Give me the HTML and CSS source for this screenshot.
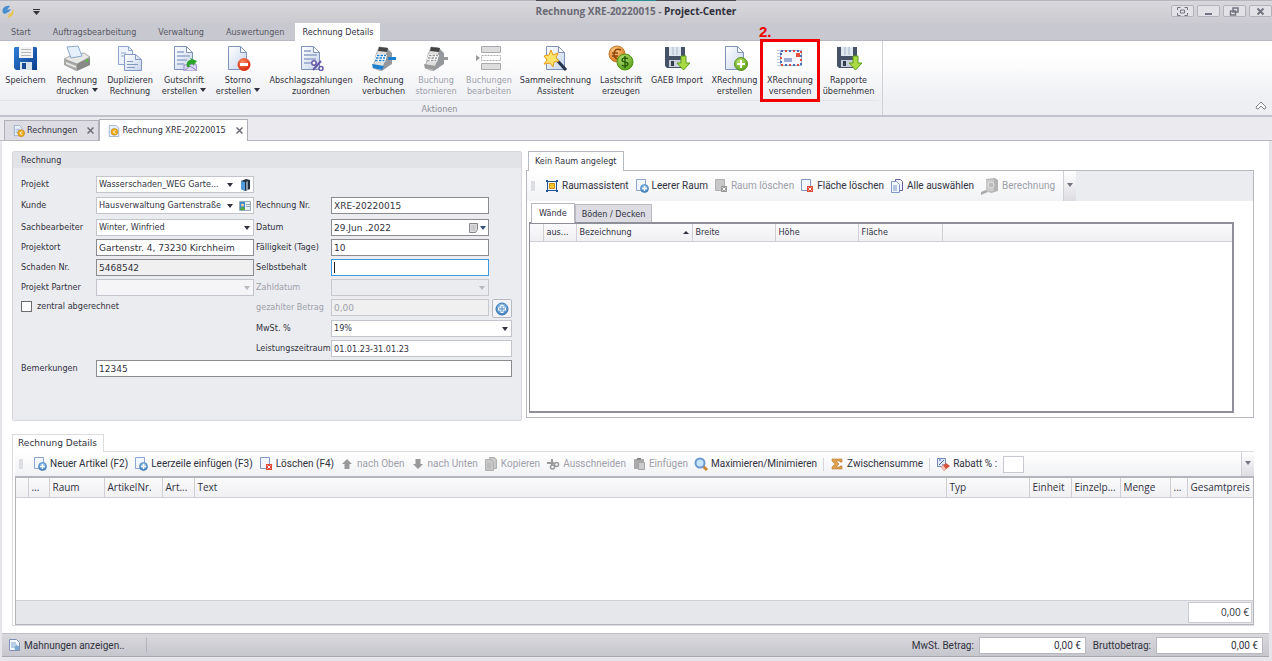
FILE: index.html
```html
<!DOCTYPE html>
<html lang="de">
<head>
    <meta charset="UTF-8">
    <meta name="viewport" content="width=device-width, initial-scale=1.0">
    <title>Rechnung XRE-20220015 - Project-Center</title>
    <link rel="stylesheet" href="styles.css">
</head>
<body>
    <svg class="sprite" aria-hidden="true">
        <defs>
            <linearGradient id="gBlue" x1="0" y1="0" x2="1" y2="1"><stop offset="0" stop-color="#2f7fd8"/><stop offset="1" stop-color="#0d3f8c"/></linearGradient>
            <linearGradient id="gPaper" x1="0" y1="0" x2="1" y2="1"><stop offset="0" stop-color="#ffffff"/><stop offset="1" stop-color="#c6d4ec"/></linearGradient>
            <radialGradient id="gRed" cx=".4" cy=".3" r=".7"><stop offset="0" stop-color="#ff8a60"/><stop offset="1" stop-color="#d62408"/></radialGradient>
            <radialGradient id="gGreen" cx=".4" cy=".3" r=".8"><stop offset="0" stop-color="#b8e070"/><stop offset="1" stop-color="#4e9a10"/></radialGradient>
            <radialGradient id="gOrange" cx=".4" cy=".3" r=".8"><stop offset="0" stop-color="#ffd08a"/><stop offset="1" stop-color="#cc6a10"/></radialGradient>
            <radialGradient id="gBall" cx=".5" cy=".3" r=".8"><stop offset="0" stop-color="#a8d4f4"/><stop offset="1" stop-color="#2d6fb4"/></radialGradient>
            <symbol id="page" viewBox="0 0 26 26">
                <path d="M3.5 1.5h12l6 6v17h-18z" fill="url(#gPaper)" stroke="#7f93b8"/>
                <path d="M15.5 1.5v6h6z" fill="#fff" stroke="#7f93b8"/>
            </symbol>
            <symbol id="save" viewBox="0 0 26 26">
                <path d="M2 2h21l1 1v22H3l-2-2V3z" fill="url(#gBlue)"/>
                <path d="M6 2h14v11H6z" fill="#f4f4f4"/>
                <path d="M8 4.500h10M8 7.500h10M8 10.500h10" stroke="#b8b8b8"/>
                <path d="M7 17h12v8H7z" fill="#d9e1ea"/>
                <path d="M9 18h4v6H9z" fill="#174a92"/>
            </symbol>
            <symbol id="print" viewBox="0 0 26 26">
                <path d="M0 15l8-4 12-2 6 4v7l-14 6L0 20z" fill="#a9aaa8"/>
                <path d="M0 14l8-4 12-2 6 4-13 7z" fill="#e8e8e6" stroke="#8c8c8a" stroke-width=".7"/>
                <path d="M3 2l11-1 4 10-11 2z" fill="#e4f1fc" stroke="#8ca9cc"/>
                <path d="M13 19l13-6v7l-13 6z" fill="#888a88"/>
                <path d="M2 17l10 4v2l-10-4z" fill="#e6e6e4"/>
                <path d="M22 16l2-1" stroke="#4cc82a" stroke-width="2"/>
            </symbol>
            <symbol id="copy" viewBox="0 0 26 26">
                <path d="M1.500 1.500h10l4 4v14h-14z" fill="#edf2fb" stroke="#8fa4cf"/>
                <path d="M11.500 1.500v4h4M4 8h5M4 11h5" fill="none" stroke="#8fa4cf"/>
                <path d="M7.500 9.500h11l6 5v11h-17z" fill="url(#gPaper)" stroke="#8498c4"/>
                <path d="M18.500 9.500v5h6M10 16.500h6M10 19.500h11M10 22.500h8" fill="none" stroke="#8498c4"/>
            </symbol>
            <symbol id="credit" viewBox="0 0 26 26">
                <use href="#page"/>
                <path d="M6 7h7M6 11h13M6 15h10M6 19h7" stroke="#a9b8d4" stroke-width="2"/>
                <path d="M13 20l12-1 1 7H13z" fill="#ddd9f4" stroke="#9a8fc6"/>
                <path d="M14 25l5-4 6 4" fill="none" stroke="#8f80ba"/>
                <path d="M16 22c-1-5 1-7 4-7l-1-2 7 3-4 5v-2c-4 0-4 1-3 3z" fill="#2da52c"/>
            </symbol>
            <symbol id="cancel" viewBox="0 0 26 26">
                <use href="#page"/>
                <circle cx="19" cy="19.500" r="6.500" fill="url(#gRed)"/>
                <path d="M15 18h8v3h-8z" fill="#fff"/>
            </symbol>
            <symbol id="percent" viewBox="0 0 26 26">
                <use href="#page"/>
                <path d="M6 6h7M6 10h13M6 14h12M6 18h7" stroke="#a3b3d2" stroke-width="2"/>
                <path d="M15 25l8-9" stroke="#6758a8" stroke-width="2"/>
                <circle cx="16" cy="18" r="2.200" fill="#fff" stroke="#6758a8" stroke-width="1.500"/>
                <circle cx="23" cy="23.500" r="2" fill="#fff" stroke="#6758a8" stroke-width="1.500"/>
            </symbol>
            <symbol id="register" viewBox="0 0 26 26">
                <path d="M8 2l8 1 4 5-4 14-6 4-8-3 3-13z" fill="#e0e0df" stroke="#999" stroke-width=".7"/>
                <path d="M16 4l5 4v11l-11 7 4-10z" fill="#94979b"/>
                <path d="M8 2l9 1-1 4-9-1z" fill="#444"/>
                <path d="M6 9l10 1-2 7-11-1z" fill="#fff"/>
                <path d="M6 10.500h2.500M9.500 10.500h2.500M13 10.500h2M5 13h2.500M8.500 13h2.500M12 13h2M4 15.500h2.500M8 15.500h2.500M11.500 15.500h2" class="keys" stroke-width="1.500"/>
                <path d="M1 19l12 2-2 4-9-2z" class="drawer"/>
                <path d="M17 12l8 0v3l-8 0z" class="drawer"/>
            </symbol>
            <symbol id="rows" viewBox="0 0 26 26">
                <path d="M5.500 1.500h19v6h-19zM5.500 18.500h19v6h-19z" fill="#ddd" stroke="#aaa"/>
                <path d="M5.500 10.500h19v5h-19z" fill="#fff" stroke="#aaa" stroke-dasharray="2 1"/>
                <path d="M0 10l4 3-4 3z" fill="#999"/>
            </symbol>
            <symbol id="wizard" viewBox="0 0 26 26">
                <use href="#page"/>
                <path d="M12 13l11 12" stroke="#26344e" stroke-width="3"/>
                <path d="M12 13l3 3" stroke="#f0f0f0" stroke-width="3"/>
                <path d="M8 5l2 5 5-2-2 5 3 3-5 1-1 5-3-4-6 1 3-4-3-4 5-1z" fill="#ffe36a" stroke="#e99a1c"/>
            </symbol>
            <symbol id="coins" viewBox="0 0 26 26">
                <circle cx="9" cy="9" r="8" fill="url(#gOrange)" stroke="#c67a28"/>
                <path d="M13 5c-4-2-7 0-7 4s3 6 7 4M4 8h6M4 11h6" fill="none" stroke="#914507" stroke-width="1.500"/>
                <circle cx="17" cy="17" r="8" fill="url(#gGreen)" stroke="#4f9412"/>
                <path d="M20 14c-2-2-6-1-6 1 0 3 6 1 6 4 0 2-4 3-6 1M17 11v12" fill="none" stroke="#28600a" stroke-width="1.500"/>
            </symbol>
            <symbol id="import" viewBox="0 0 26 26">
                <path d="M1 2h20v21H3l-2-2z" fill="#465366"/>
                <path d="M5 2h12v9H5z" fill="#dfe7f1"/>
                <path d="M9 2v8M13 2v8" stroke="#aab8ca"/>
                <path d="M5 15h12v7H5z" fill="#c8cfda"/>
                <path d="M7 16h3v5H7z" fill="#333e50"/>
                <path d="M17 11h5v7h4l-6.500 7-6.500-7h4z" fill="#a9d943" stroke="#5d9d1b"/>
            </symbol>
            <symbol id="create" viewBox="0 0 26 26">
                <use href="#page"/>
                <circle cx="19" cy="19" r="6.500" fill="url(#gGreen)" stroke="#5c941f"/>
                <path d="M19 15v8M15 19h8" stroke="#fff" stroke-width="2"/>
            </symbol>
            <symbol id="mail" viewBox="0 0 26 26">
                <path d="M0 5.500h3M0 8.500h3M0 11.500h3M0 14.500h3M0 17.500h3M0 20.500h3" stroke="#c2cbe2"/>
                <path d="M3.500 5.500h21v15h-21z" fill="#f5f7fd" stroke="#9aaed8"/>
                <path d="M4 6h20v14H4z" fill="none" stroke="#4a6cb0" stroke-width="2" stroke-dasharray="2 6"/>
                <path d="M4 6h20v14H4z" fill="none" stroke="#dc4c43" stroke-width="2" stroke-dasharray="2 6" stroke-dashoffset="4"/>
                <path d="M7 14h8M7 16h8" stroke="#9cabd0" stroke-width="2"/>
                <path d="M19 8h4v4h-4z" fill="#e8503c"/>
            </symbol>
            <symbol id="docAdd" viewBox="0 0 14 14">
                <path d="M1.500.500h9v11h-9z" fill="#f1f6ff" stroke="#8ea4d4"/>
                <circle cx="9.500" cy="9.500" r="4" fill="url(#gBall)" stroke="#3777b3" stroke-width=".6"/>
                <path d="M9.500 7v5M7 9.500h5" stroke="#fff" stroke-width="1.300"/>
            </symbol>
            <symbol id="docDel" viewBox="0 0 14 14">
                <path d="M1.500.500h9v11h-9z" class="sheet"/>
                <path d="M7 7h6v6H7z" class="mark"/>
                <path d="M8.500 8.500l3 3M11.500 8.500l-3 3" stroke="#fff"/>
            </symbol>
            <symbol id="docCopy" viewBox="0 0 14 14">
                <path d="M5.500.500h5l2 2v9h-7z" class="sheet dark"/>
                <path d="M1.500 2.500h5l3 3v8h-8z" class="sheet"/>
                <path d="M3 7h4M3 9h4M3 11h4" class="line"/>
            </symbol>
            <symbol id="docCoin" viewBox="0 0 14 14">
                <path d="M1.500.500h8l3 3v10h-11z" fill="#e8f1fd" stroke="#97a9cb"/>
                <circle cx="7.500" cy="8" r="4" fill="#efaa15" stroke="#ad7810" stroke-width=".6"/>
                <path d="M9 6l-3 2 3 2" fill="none" stroke="#fff"/>
            </symbol>
            <symbol id="docList" viewBox="0 0 14 14">
                <path d="M1.500.500h6l3 3v9h-9z" fill="#e8f1fd" stroke="#97a9cb"/>
                <path d="M3 5h5M3 7h5M3 9h3" stroke="#9fb2d4"/>
                <circle cx="9.500" cy="9.500" r="4" fill="#efaa15" stroke="#ad7810" stroke-width=".6"/>
                <path d="M11 7.500l-3 2 3 2" fill="none" stroke="#fff"/>
            </symbol>
        </defs>
    </svg>

    <header class="titlebar">
        <div class="quick">
            <svg width="14" height="14" viewBox="0 0 14 14"><path d="M2 8C0 3 5 0 9 1L6 5l4-1C8 8 6 7 4 9z" fill="#4a8ed0"/><path d="M12 4c2 5-2 9-6 9 2-1 3-3 0-4 4 1 5-2 6-5z" fill="#eac54b"/></svg>
            <svg width="7" height="6" viewBox="0 0 7 6"><path d="M0 .5h7" stroke="#333"/><path d="M0 2h7L3.500 6z" fill="#333"/></svg>
        </div>
        <h1>Rechnung XRE-20220015 - <span>Project-Center</span></h1>
        <div class="window-buttons">
            <button type="button" aria-label="Vollbild"><svg width="11" height="9" viewBox="0 0 11 9"><path d="M.5 3V.500h3M7.500.500h3V3M.5 6v2.500h3M7.500 8.500h3V6M3.500 3h4v3h-4z" fill="none" stroke="#747482"/></svg></button>
            <button type="button" aria-label="Minimieren"><svg width="11" height="9" viewBox="0 0 11 9"><path d="M2 7h7" stroke="#747482" stroke-width="2"/></svg></button>
            <button type="button" aria-label="Wiederherstellen"><svg width="11" height="9" viewBox="0 0 11 9"><path d="M4 1h5v4H4zM1.500 4h5v4h-5z" fill="#e4e4e8" stroke="#747482" stroke-width="1.500"/></svg></button>
            <button type="button" aria-label="Schließen"><svg width="11" height="9" viewBox="0 0 11 9"><path d="M2.500 1.500l6 6M8.500 1.500l-6 6" stroke="#747482" stroke-width="2"/></svg></button>
        </div>
    </header>

    <nav class="ribbon-tabs">
        <a href="#">Start</a>
        <a href="#">Auftragsbearbeitung</a>
        <a href="#">Verwaltung</a>
        <a href="#">Auswertungen</a>
        <a href="#" class="active">Rechnung Details</a>
    </nav>

    <section class="ribbon">
        <div class="ribbon-group">
            <div class="ribbon-items">
                <button type="button"><svg><use href="#save"/></svg>Speichern</button>
                <button type="button"><svg><use href="#print"/></svg>Rechnung<br><span class="drop">drucken</span></button>
                <button type="button"><svg><use href="#copy"/></svg>Duplizieren<br>Rechnung</button>
                <button type="button"><svg><use href="#credit"/></svg>Gutschrift<br><span class="drop">erstellen</span></button>
                <button type="button"><svg><use href="#cancel"/></svg>Storno<br><span class="drop">erstellen</span></button>
                <button type="button"><svg><use href="#percent"/></svg>Abschlagszahlungen<br>zuordnen</button>
                <button type="button"><svg class="blue"><use href="#register"/></svg>Rechnung<br>verbuchen</button>
                <button type="button" disabled><svg class="grey"><use href="#register"/></svg>Buchung<br>stornieren</button>
                <button type="button" disabled><svg><use href="#rows"/></svg>Buchungen<br>bearbeiten</button>
                <button type="button"><svg><use href="#wizard"/></svg>Sammelrechnung<br>Assistent</button>
                <button type="button"><svg><use href="#coins"/></svg>Lastschrift<br>erzeugen</button>
                <button type="button"><svg><use href="#import"/></svg>GAEB Import</button>
                <button type="button"><svg><use href="#create"/></svg>XRechnung<br>erstellen</button>
                <button type="button" class="marked"><svg><use href="#mail"/></svg>XRechnung<br>versenden<strong class="step">2.</strong></button>
                <button type="button"><svg><use href="#import"/></svg>Rapporte<br>übernehmen</button>
            </div>
            <div class="group-title">Aktionen</div>
        </div>
        <button type="button" class="collapse" aria-label="Menüband minimieren"><svg width="12" height="9" viewBox="0 0 12 9"><path d="M1 6l5-5 5 5-1 2h-1L6 5 3 8H2z" fill="#fff" stroke="#85858d"/></svg></button>
    </section>

    <nav class="doc-tabs">
        <div class="doc-tab"><svg class="ico"><use href="#docList"/></svg><a href="#">Rechnungen</a><button type="button" aria-label="Schließen"><svg width="7" height="7" viewBox="0 0 7 7"><path d="M.5.5l6 6M6.500.500l-6 6" stroke="#6c6c76" stroke-width="1.500"/></svg></button></div>
        <div class="doc-tab active"><svg class="ico"><use href="#docCoin"/></svg><a href="#">Rechnung XRE-20220015</a><button type="button" aria-label="Schließen"><svg width="7" height="7" viewBox="0 0 7 7"><path d="M.5.5l6 6M6.500.500l-6 6" stroke="#6c6c76" stroke-width="1.500"/></svg></button></div>
    </nav>

    <main>
        <div class="upper">
            <form class="invoice">
                <h2>Rechnung</h2>
                <div class="fields">
                    <label for="projekt">Projekt</label>
                    <div class="combo">
                        <select id="projekt"><option>Wasserschaden_WEG Garte...</option></select>
                        <svg class="ico" viewBox="0 0 14 14"><path d="M3 3l5-2 4 1v9l-5 2-4-2z" fill="#24303f"/><path d="M3 3l4 1v9l-4-2z" fill="#4f9bdc"/><path d="M8 4l2-1v9l-2 1z" fill="#8a97a5"/></svg>
                    </div>
                    <label for="kunde">Kunde</label>
                    <div class="combo">
                        <select id="kunde"><option>Hausverwaltung Gartenstraße</option></select>
                        <svg class="ico" viewBox="0 0 14 14"><path d="M1.500 2.500h11v9h-11z" fill="#eaf1f6" stroke="#9ab"/><path d="M2 3h5v8H2z" fill="#3b8ad0"/><circle cx="4.500" cy="6" r="1.500" fill="#f3cf9c"/><path d="M2 11c0-4 5-4 5 0z" fill="#56a93d"/><path d="M8 5.500h4M8 7.500h4" stroke="#9ab"/></svg>
                    </div>
                    <label for="nr" class="second">Rechnung Nr.</label>
                    <input type="text" id="nr" class="strong" value="XRE-20220015">
                    <label for="bearbeiter">Sachbearbeiter</label>
                    <select id="bearbeiter"><option>Winter, Winfried</option></select>
                    <label for="datum" class="second">Datum</label>
                    <div class="combo strong">
                        <input type="text" id="datum" value="29.Jun .2022">
                        <svg class="cal" width="19" height="12" viewBox="0 0 19 12"><path d="M1.500 1.500h8v6l-2 3h-6z" fill="#dcdce0" stroke="#85858b"/><path d="M3 4h5M3 6h5M3 8h4" stroke="#bbb"/><path d="M12 4h6l-3 4z" fill="#365078"/></svg>
                    </div>
                    <label for="ort">Projektort</label>
                    <input type="text" id="ort" class="strong" value="Gartenstr. 4, 73230 Kirchheim">
                    <label for="faellig" class="second">Fälligkeit (Tage)</label>
                    <input type="text" id="faellig" class="strong" value="10">
                    <label for="schaden">Schaden Nr.</label>
                    <input type="text" id="schaden" class="strong locked" value="5468542" readonly>
                    <label for="selbst" class="second">Selbstbehalt</label>
                    <input type="text" id="selbst" class="strong focused" value="">
                    <label for="partner">Projekt Partner</label>
                    <select id="partner" class="pale" disabled><option></option></select>
                    <label for="zahldatum" class="second off">Zahldatum</label>
                    <select id="zahldatum" class="off" disabled><option></option></select>
                    <label class="check"><input type="checkbox">zentral abgerechnet</label>
                    <label for="betrag" class="second off">gezahlter Betrag</label>
                    <input type="text" id="betrag" class="strong off" value="0,00" disabled>
                    <button type="button" class="add" aria-label="Zahlung hinzufügen"><svg width="14" height="14" viewBox="0 0 14 14"><circle cx="7" cy="7" r="6" fill="url(#gBall)" stroke="#3a74b2"/><path d="M7 3v8M3 7h8" stroke="#fff" stroke-width="3"/><path d="M7 4v6M4 7h6" stroke="#4685c4"/></svg></button>
                    <label for="mwst" class="second">MwSt. %</label>
                    <select id="mwst" class="wide"><option>19%</option></select>
                    <label for="zeitraum" class="second">Leistungszeitraum</label>
                    <input type="text" id="zeitraum" class="wide" value="01.01.23-31.01.23">
                    <label for="bemerkungen" class="last">Bemerkungen</label>
                    <input type="text" id="bemerkungen" class="strong full" value="12345">
                </div>
            </form>

            <section class="rooms">
                <div class="tabs"><a href="#" class="active">Kein Raum angelegt</a></div>
                <div class="rooms-body">
                    <div class="strip">
                        <div class="toolbar">
                            <span class="grip"></span>
                            <button type="button"><svg class="ico" viewBox="0 0 14 14"><path d="M2.500 2.500h9v9h-9z" fill="#fff" stroke="#264e96"/><path d="M4.500 4.500h5v5h-5z" fill="#f8c42e" stroke="#ce8c11"/><path d="M1 1h2v2H1zM11 1h2v2h-2zM1 11h2v2H1zM11 11h2v2h-2z" fill="#2457a4"/></svg>Raumassistent</button>
                            <button type="button"><svg class="ico"><use href="#docAdd"/></svg>Leerer Raum</button>
                            <button type="button" disabled><svg class="ico"><use href="#docDel"/></svg>Raum löschen</button>
                            <button type="button"><svg class="ico"><use href="#docDel"/></svg>Fläche löschen</button>
                            <button type="button"><svg class="ico"><use href="#docCopy"/></svg>Alle auswählen</button>
                            <button type="button" disabled><svg class="tape" width="19" height="19" viewBox="0 0 19 19"><path d="M6 2l9-1 3 2v11l-7 2-5-2z" fill="#b4b4b4"/><path d="M6 3l8-1v12l-8 1z" fill="#c9c9c9"/><circle cx="11" cy="8" r="3" fill="#bbb" stroke="#e2e2e2"/><path d="M6 13l-5 2v3l7-3" fill="#aaa"/></svg>Berechnung</button>
                        </div>
                        <button type="button" class="more" aria-label="Weitere Schaltflächen"></button>
                    </div>
                    <div class="tabs inner"><a href="#" class="active">Wände</a><a href="#">Böden / Decken</a></div>
                    <div class="surface">
                        <table>
                            <colgroup><col class="w13"><col class="w33"><col class="w116"><col class="w83"><col class="w83"><col class="w84"><col></colgroup>
                            <thead><tr><th></th><th>aus...</th><th class="sorted">Bezeichnung</th><th>Breite</th><th>Höhe</th><th>Fläche</th><th></th></tr></thead>
                        </table>
                    </div>
                </div>
            </section>
        </div>

        <section class="details">
            <div class="tabs"><a href="#" class="active">Rechnung Details</a></div>
            <div class="details-body">
                <div class="strip">
                    <div class="toolbar">
                        <span class="grip"></span>
                        <button type="button"><svg class="ico"><use href="#docAdd"/></svg>Neuer Artikel (F2)</button>
                        <button type="button"><svg class="ico"><use href="#docAdd"/></svg>Leerzeile einfügen (F3)</button>
                        <button type="button"><svg class="ico"><use href="#docDel"/></svg>Löschen (F4)</button>
                        <button type="button" disabled><svg class="ico" viewBox="0 0 14 14"><path d="M7 2l5 5H9.500v5h-5V7H2z" fill="#999"/></svg>nach Oben</button>
                        <button type="button" disabled><svg class="ico" viewBox="0 0 14 14"><path d="M7 12L2 7h2.500V2h5v5H12z" fill="#999"/></svg>nach Unten</button>
                        <button type="button" disabled><svg class="ico"><use href="#docCopy"/></svg>Kopieren</button>
                        <button type="button" disabled><svg class="ico" viewBox="0 0 14 14"><path d="M1 6h7M6 2v6" stroke="#999" stroke-width="2"/><circle cx="6.500" cy="10" r="2" fill="none" stroke="#999" stroke-width="1.500"/><circle cx="10.500" cy="7.500" r="2" fill="none" stroke="#999" stroke-width="1.500"/></svg>Ausschneiden</button>
                        <button type="button" disabled><svg class="ico" viewBox="0 0 14 14"><path d="M2 2h10v10H2z" fill="#aaa"/><path d="M5 1h4v2H5z" fill="#888"/><path d="M6.500 5.500h6v7h-6z" fill="#ccc" stroke="#a4a4a4"/></svg>Einfügen</button>
                        <button type="button"><svg class="ico" viewBox="0 0 14 14"><path d="M9 9l4 4" stroke="#cc8435" stroke-width="3"/><circle cx="6" cy="6" r="4.500" fill="#c5e5fb" stroke="#6c98cc" stroke-width="2"/></svg>Maximieren/Minimieren</button>
                        <span class="sep"></span>
                        <button type="button"><svg class="ico" viewBox="0 0 14 14"><path d="M2 2h10v3h-2V4H6l3 3-3 3h4V9h2v3H2v-2l3-3-3-3z" fill="#dfa04b" stroke="#bd7830" stroke-width=".6"/></svg>Zwischensumme</button>
                        <span class="sep"></span>
                        <label for="rabatt"><svg class="ico" viewBox="0 0 14 14"><path d="M1.500 1.500h8v8h-8z" fill="#e3eafa" stroke="#7187b8"/><path d="M3 8l5-5M3 3h2M6 8h2" stroke="#4764a6"/><path d="M5 10l5-4 4 3-6 5z" fill="#d6513d"/><path d="M5 10l3 4 2-2-3-4z" fill="#f4c1b6"/></svg>Rabatt % :</label>
                        <input type="text" id="rabatt" class="discount">
                    </div>
                    <button type="button" class="more" aria-label="Weitere Schaltflächen"></button>
                </div>
                <div class="articles">
                    <table>
                        <colgroup><col class="w12"><col class="w21"><col class="w55"><col class="w58"><col class="w32"><col><col class="w83"><col class="w42"><col class="w49"><col class="w50"><col class="w17"><col class="w66"></colgroup>
                        <thead><tr><th></th><th>...</th><th>Raum</th><th>ArtikelNr.</th><th>Art...</th><th>Text</th><th>Typ</th><th>Einheit</th><th>Einzelp...</th><th>Menge</th><th>...</th><th>Gesamtpreis</th></tr></thead>
                    </table>
                    <div class="sum"><output>0,00 €</output></div>
                </div>
            </div>
        </section>
    </main>

    <footer class="statusbar">
        <button type="button"><svg class="ico" viewBox="0 0 14 14"><path d="M2.500 1.500h7l3 3v8h-10z" fill="#f4f8ff" stroke="#7d90b5"/><path d="M4 5h5M4 7h6M4 9h4" stroke="#7ba1cc"/><circle cx="10" cy="10" r="2.500" fill="#7aaad2"/></svg>Mahnungen anzeigen..</button>
        <label for="steuer">MwSt. Betrag:</label>
        <input type="text" id="steuer" value="0,00 €" readonly>
        <label for="brutto">Bruttobetrag:</label>
        <input type="text" id="brutto" value="0,00 €" readonly>
    </footer>
</body>
</html>
```
FILE: styles.css
```css
* {
    box-sizing: border-box;
}
body {
    margin: 0;
    min-height: 100vh;
    display: flex;
    flex-direction: column;
    padding-bottom: 4px;
    background: #e6e6ea;
    color: #32323e;
    font-family: "DejaVu Sans Condensed", "Open Sans", sans-serif;
    font-size: 9px;
    line-height: 11px;
}
button, input, select {
    font: inherit;
    color: inherit;
    margin: 0;
    padding: 0;
    border-radius: 0;
}
button {
    border: none;
    background: none;
    white-space: nowrap;
}
button:disabled {
    color: #a0a0aa;
    --sheet: #c8c8c8;
    --edge: #b0b0b0;
    --mark: #999;
}
a {
    color: inherit;
    text-decoration: none;
}
table {
    width: 100%;
    table-layout: fixed;
    border-collapse: collapse;
}
h1, h2 {
    margin: 0;
    font-size: inherit;
    font-weight: normal;
}
.sprite {
    position: absolute;
    width: 0;
    height: 0;
}
.ico {
    width: 14px;
    height: 14px;
    flex: none;
}

/* title bar */
.titlebar {
    display: grid;
    grid-template-columns: 1fr auto 1fr;
    height: 23px;
    background: linear-gradient(#b6b6be 1px, #d8d8dc 1px, #cacad0);
}
.quick {
    display: flex;
    align-items: center;
    gap: 18px;
    padding-left: 1px;
}
.titlebar h1 {
    padding-top: 6px;
    background: linear-gradient(90deg, #4c4850 40%, #2c8c90 40% 60%, #4c4850 60%) top / 100% 1px no-repeat;
    font-family: "Open Sans", sans-serif;
    font-size: 10px;
    font-weight: bold;
    color: #6a6a76;
}
.titlebar h1 span {
    color: #30303c;
}
.window-buttons {
    display: flex;
    justify-content: flex-end;
    gap: 3px;
    padding-top: 5px;
}
.window-buttons button {
    display: flex;
    align-items: center;
    justify-content: center;
    width: 23px;
    height: 12px;
    border: 1px solid #b2b2ba;
    border-radius: 2px;
    background: #e2e2e6;
}

/* ribbon */
.ribbon-tabs {
    display: flex;
    align-items: stretch;
    height: 18px;
    border-bottom: 1px solid #b8b8c2;
    background: #c8c8d0;
    color: #585864;
}
.ribbon-tabs a {
    padding: 4px 11px 0;
}
.ribbon-tabs .active {
    margin-bottom: -1px;
    padding: 4px 7px 0;
    background: #fff;
    color: #32323e;
}
.ribbon {
    display: flex;
    justify-content: space-between;
    border-bottom: 2px solid #c2c2ca;
    background: linear-gradient(#fff 20%, #eeeff3 80%);
}
.ribbon-group {
    border-right: 1px solid #d0d0d6;
    padding-right: 3px;
}
.ribbon-items {
    display: grid;
    grid-template-columns: 51px 52px 54px 54px 54px 92px 53px 52px 54px 79px 52px 60px 55px 56px 61px;
    height: 60px;
    border-bottom: 1px solid #e4e4e8;
}
.ribbon-items button {
    display: block;
    padding-top: 4px;
    text-align: center;
    align-self: start;
}
.ribbon-items svg {
    display: block;
    width: 26px;
    height: 26px;
    margin: 0 auto 4px;
}
.ribbon-items .blue {
    color: #1c7fd0;
}
.ribbon-items .grey {
    color: #999;
}
.keys {
    stroke: currentColor;
}
.drawer {
    fill: currentColor;
}
.drop::after, .more::after {
    content: "";
    display: inline-block;
    margin-left: 3px;
    border: 3px solid transparent;
    border-top: 4px solid #32323e;
    border-bottom: none;
    vertical-align: 2px;
}
.marked {
    position: relative;
}
.marked::before {
    content: "";
    position: absolute;
    inset: -2px -2px -5px;
    border: 3px solid #f00000;
}
.step {
    position: absolute;
    left: -3px;
    top: -18px;
    font: bold 15px/17px "Liberation Sans", sans-serif;
    color: #f00000;
}
.group-title {
    padding: 3px 0 0;
    text-align: center;
    color: #8e8e98;
}
.collapse {
    align-self: flex-end;
    padding: 0 5px 2px;
}

/* document tabs */
.doc-tabs {
    display: flex;
    align-items: flex-end;
    height: 24px;
    padding-left: 4px;
    border-bottom: 1px solid #b8b8c0;
    background: #ebebef;
}
.doc-tab {
    display: flex;
    align-items: center;
    gap: 2px;
    height: 20px;
    padding: 0 4px 0 8px;
    border: 1px solid #b0b0b8;
    border-bottom: none;
    background: #dcdce2;
}
.doc-tab.active {
    height: 22px;
    margin-bottom: -1px;
    background: #fff;
}
.doc-tab .ico {
    width: 12px;
    height: 12px;
}
.doc-tab button {
    display: flex;
    margin-left: 8px;
}

/* content */
main {
    flex: 1;
    display: flex;
    flex-direction: column;
    gap: 13px;
    margin: 0 3px 0 2px;
    padding: 10px 15px 7px 10px;
    background: #fff;
}
.upper {
    display: grid;
    grid-template-columns: 510fr 728fr;
    gap: 4px;
}
.invoice {
    border: 1px solid #d6d6dc;
    border-radius: 2px;
    background: #ebecf0;
}
.invoice h2 {
    padding: 3px 8px 2px;
    background: #e2e3e7;
}
.fields {
    display: grid;
    grid-template-columns: 75px 1fr 77px 1fr 23px;
    grid-template-rows: 18px 19px 17px 17px 17px 17px 18px 17px 17px 17px;
    row-gap: 3px;
    align-items: start;
    padding: 8px 9px 43px 8px;
}
.fields label {
    grid-column: 1;
    padding-top: 3px;
    white-space: nowrap;
}
.fields .second {
    grid-column: 3;
    padding-left: 2px;
}
.fields .off {
    color: #a0a0a8;
}
.fields .check {
    grid-column: 1 / 3;
    display: flex;
    align-items: center;
    gap: 5px;
    padding-top: 2px;
}
.fields .last {
    grid-row: 10;
}
.fields .wide {
    grid-column: 4 / 6;
}
.fields .full {
    grid-column: 2 / 6;
}
.fields input, .fields select, .fields .combo {
    width: 100%;
    min-width: 0;
    height: 17px;
    border: 1px solid #c4c4cc;
    background-color: #fff;
    padding: 0 2px;
}
.fields select {
    appearance: none;
    background-image: url("data:image/svg+xml,%3Csvg xmlns='http://www.w3.org/2000/svg' width='6' height='4'%3E%3Cpath d='M0 0h6L3 4z' fill='%2332323e'/%3E%3C/svg%3E");
    background-repeat: no-repeat;
    background-position: right 3px center;
}
.fields select:disabled {
    background-image: url("data:image/svg+xml,%3Csvg xmlns='http://www.w3.org/2000/svg' width='6' height='4'%3E%3Cpath d='M0 0h6L3 4z' fill='%23b8b8c0'/%3E%3C/svg%3E");
    opacity: 1;
}
.fields .combo {
    display: flex;
    align-items: center;
    padding: 0 1px 0 0;
}
.fields .combo select, .fields .combo input {
    flex: 1;
    height: 15px;
    border: none;
}
.fields .combo svg {
    margin-left: 2px;
}
.fields .check input {
    appearance: none;
    width: 11px;
    height: 11px;
    padding: 0;
    border-color: #6c6c70;
}
.fields .strong {
    border-color: #8c8c90;
    font-family: "DejaVu Sans", sans-serif;
}
.fields .locked {
    background-color: #f0f0f0;
}
/* active field with its text cursor */
.fields .focused {
    border-color: #3f97dc;
    background-image: linear-gradient(#222, #222);
    background-size: 1px 11px;
    background-position: 2px center;
    background-repeat: no-repeat;
}
.fields .pale {
    background-color: #f5f5f7;
}
.fields select.off, .fields input.off {
    border-color: #c8c8ce;
    background-color: #ebecf0;
}
.fields input.off {
    background-color: #f0f0f0;
}
.add {
    display: flex;
    align-items: center;
    justify-content: center;
    justify-self: end;
    width: 20px;
    height: 19px;
    border: 1px solid #b8b8c2;
    border-radius: 2px;
    background: #f3f4f8;
}

/* tab strips */
.tabs {
    display: flex;
    align-items: flex-end;
    position: relative;
}
.tabs a {
    padding: 4px 6px 2px;
    border: 1px solid #b8b8c0;
    border-bottom: none;
    background: #dcdce2;
}
.tabs .active {
    padding: 4px 6px;
    margin-bottom: -1px;
    background: #fff;
}
.inner .active {
    padding: 4px 7px;
}

/* tool bars */
.strip {
    display: flex;
    background: #ebecf0;
}
.toolbar {
    display: flex;
    align-items: center;
    gap: 6px;
    padding-left: 4px;
    background: linear-gradient(#fff, #f1f2f5);
    font-family: Roboto, sans-serif;
    font-size: 10px;
    line-height: 14px;
}
.toolbar button, .toolbar label {
    display: flex;
    align-items: center;
    gap: 3px;
    white-space: nowrap;
}
.grip {
    width: 4px;
    height: 10px;
    margin-right: 4px;
    background: #dedee2;
}
.sep {
    width: 1px;
    height: 13px;
    background: #d4d4da;
}
.more {
    width: 13px;
    border-left: 1px solid #d0d0d6;
    background: linear-gradient(#fff, #dcdce2);
}
.more::after {
    margin-left: 0;
    border-top-color: #747480;
}
.sheet {
    fill: var(--sheet, #f1f6ff);
    stroke: var(--edge, #8297c8);
}
.dark {
    stroke: var(--edge, #6a5aa0);
}
.mark {
    fill: var(--mark, #df4b35);
}
.line {
    stroke: var(--edge, #7a98c8);
}

/* rooms */
.rooms {
    display: flex;
    flex-direction: column;
    margin-bottom: 3px;
}
.rooms .tabs {
    padding-left: 2px;
}
.rooms-body {
    flex: 1;
    display: flex;
    flex-direction: column;
    padding: 0 19px 4px 2px;
    border: 1px solid #b8b8c0;
}
.rooms .strip {
    margin: 0 -19px 2px -2px;
    height: 30px;
}
.rooms .strip .toolbar {
    padding-right: 8px;
}
.surface {
    flex: 1;
    border: 1px solid #8f8f99;
    border-width: 2px 2px 2px 1px;
}
th {
    height: 17px;
    padding: 0 3px;
    border-right: 1px solid #cfcfd5;
    border-bottom: 1px solid #cfcfd5;
    background: linear-gradient(#fafafc, #f0f0f3);
    font-weight: normal;
    text-align: left;
    white-space: nowrap;
}
th:last-child {
    border-right: none;
}
.sorted::after {
    content: "";
    float: right;
    margin-top: 4px;
    border: 3px solid transparent;
    border-top: none;
    border-bottom: 3px solid #32323e;
}

/* article list */
.details {
    flex: 1;
    display: flex;
    flex-direction: column;
}
.details .tabs a {
    border-color: #dcdce0;
    padding: 3px 6px 3px 5px;
    font-family: "DejaVu Sans", sans-serif;
}
.details-body {
    flex: 1;
    display: flex;
    flex-direction: column;
    padding-left: 2px;
    border: 1px solid #dcdce0;
    border-right: none;
}
.details .strip {
    justify-content: space-between;
    height: 24px;
    background: linear-gradient(#fff, #f1f2f5);
}
.discount {
    width: 21px;
    height: 17px;
    border: 1px solid #c8c8d0;
    background: #fff;
}
.articles {
    flex: 1;
    display: flex;
    flex-direction: column;
    justify-content: space-between;
    border: 1px solid #b4b4bc;
    border-top-width: 2px;
    font-family: "Open Sans", sans-serif;
    font-size: 10px;
}
.articles th {
    height: 19px;
}
.sum {
    display: flex;
    justify-content: flex-end;
    padding: 1px;
    border-top: 1px solid #cfcfd5;
    background: #e6e7ea;
}
.sum output {
    width: 64px;
    padding: 4px 2px;
    border: 1px solid #cacad0;
    background: #fff;
    text-align: right;
}
.w12 { width: 12px; }
.w13 { width: 13px; }
.w17 { width: 17px; }
.w21 { width: 21px; }
.w32 { width: 32px; }
.w33 { width: 33px; }
.w42 { width: 42px; }
.w49 { width: 49px; }
.w50 { width: 50px; }
.w55 { width: 55px; }
.w58 { width: 58px; }
.w66 { width: 66px; }
.w83 { width: 83px; }
.w84 { width: 84px; }
.w116 { width: 116px; }

/* status bar */
.statusbar {
    display: flex;
    align-items: center;
    gap: 5px;
    height: 24px;
    margin: 0 3px 0 2px;
    padding: 0 6px 0 5px;
    border-top: 1px solid #c0c0c8;
    border-bottom: 1px solid #a8a8b0;
    background: linear-gradient(#d8d8dd, #c6c6cd);
    font-family: Roboto, sans-serif;
    font-size: 10px;
}
.statusbar button {
    display: flex;
    align-items: center;
    gap: 3px;
    margin-right: auto;
    padding-right: 22px;
    border-right: 1px solid #b4b4bc;
}
.statusbar input {
    width: 107px;
    height: 17px;
    padding-right: 4px;
    border: 1px solid #b8b8c0;
    background: #fff;
    text-align: right;
}
.statusbar input + label {
    margin-left: 2px;
}
```
